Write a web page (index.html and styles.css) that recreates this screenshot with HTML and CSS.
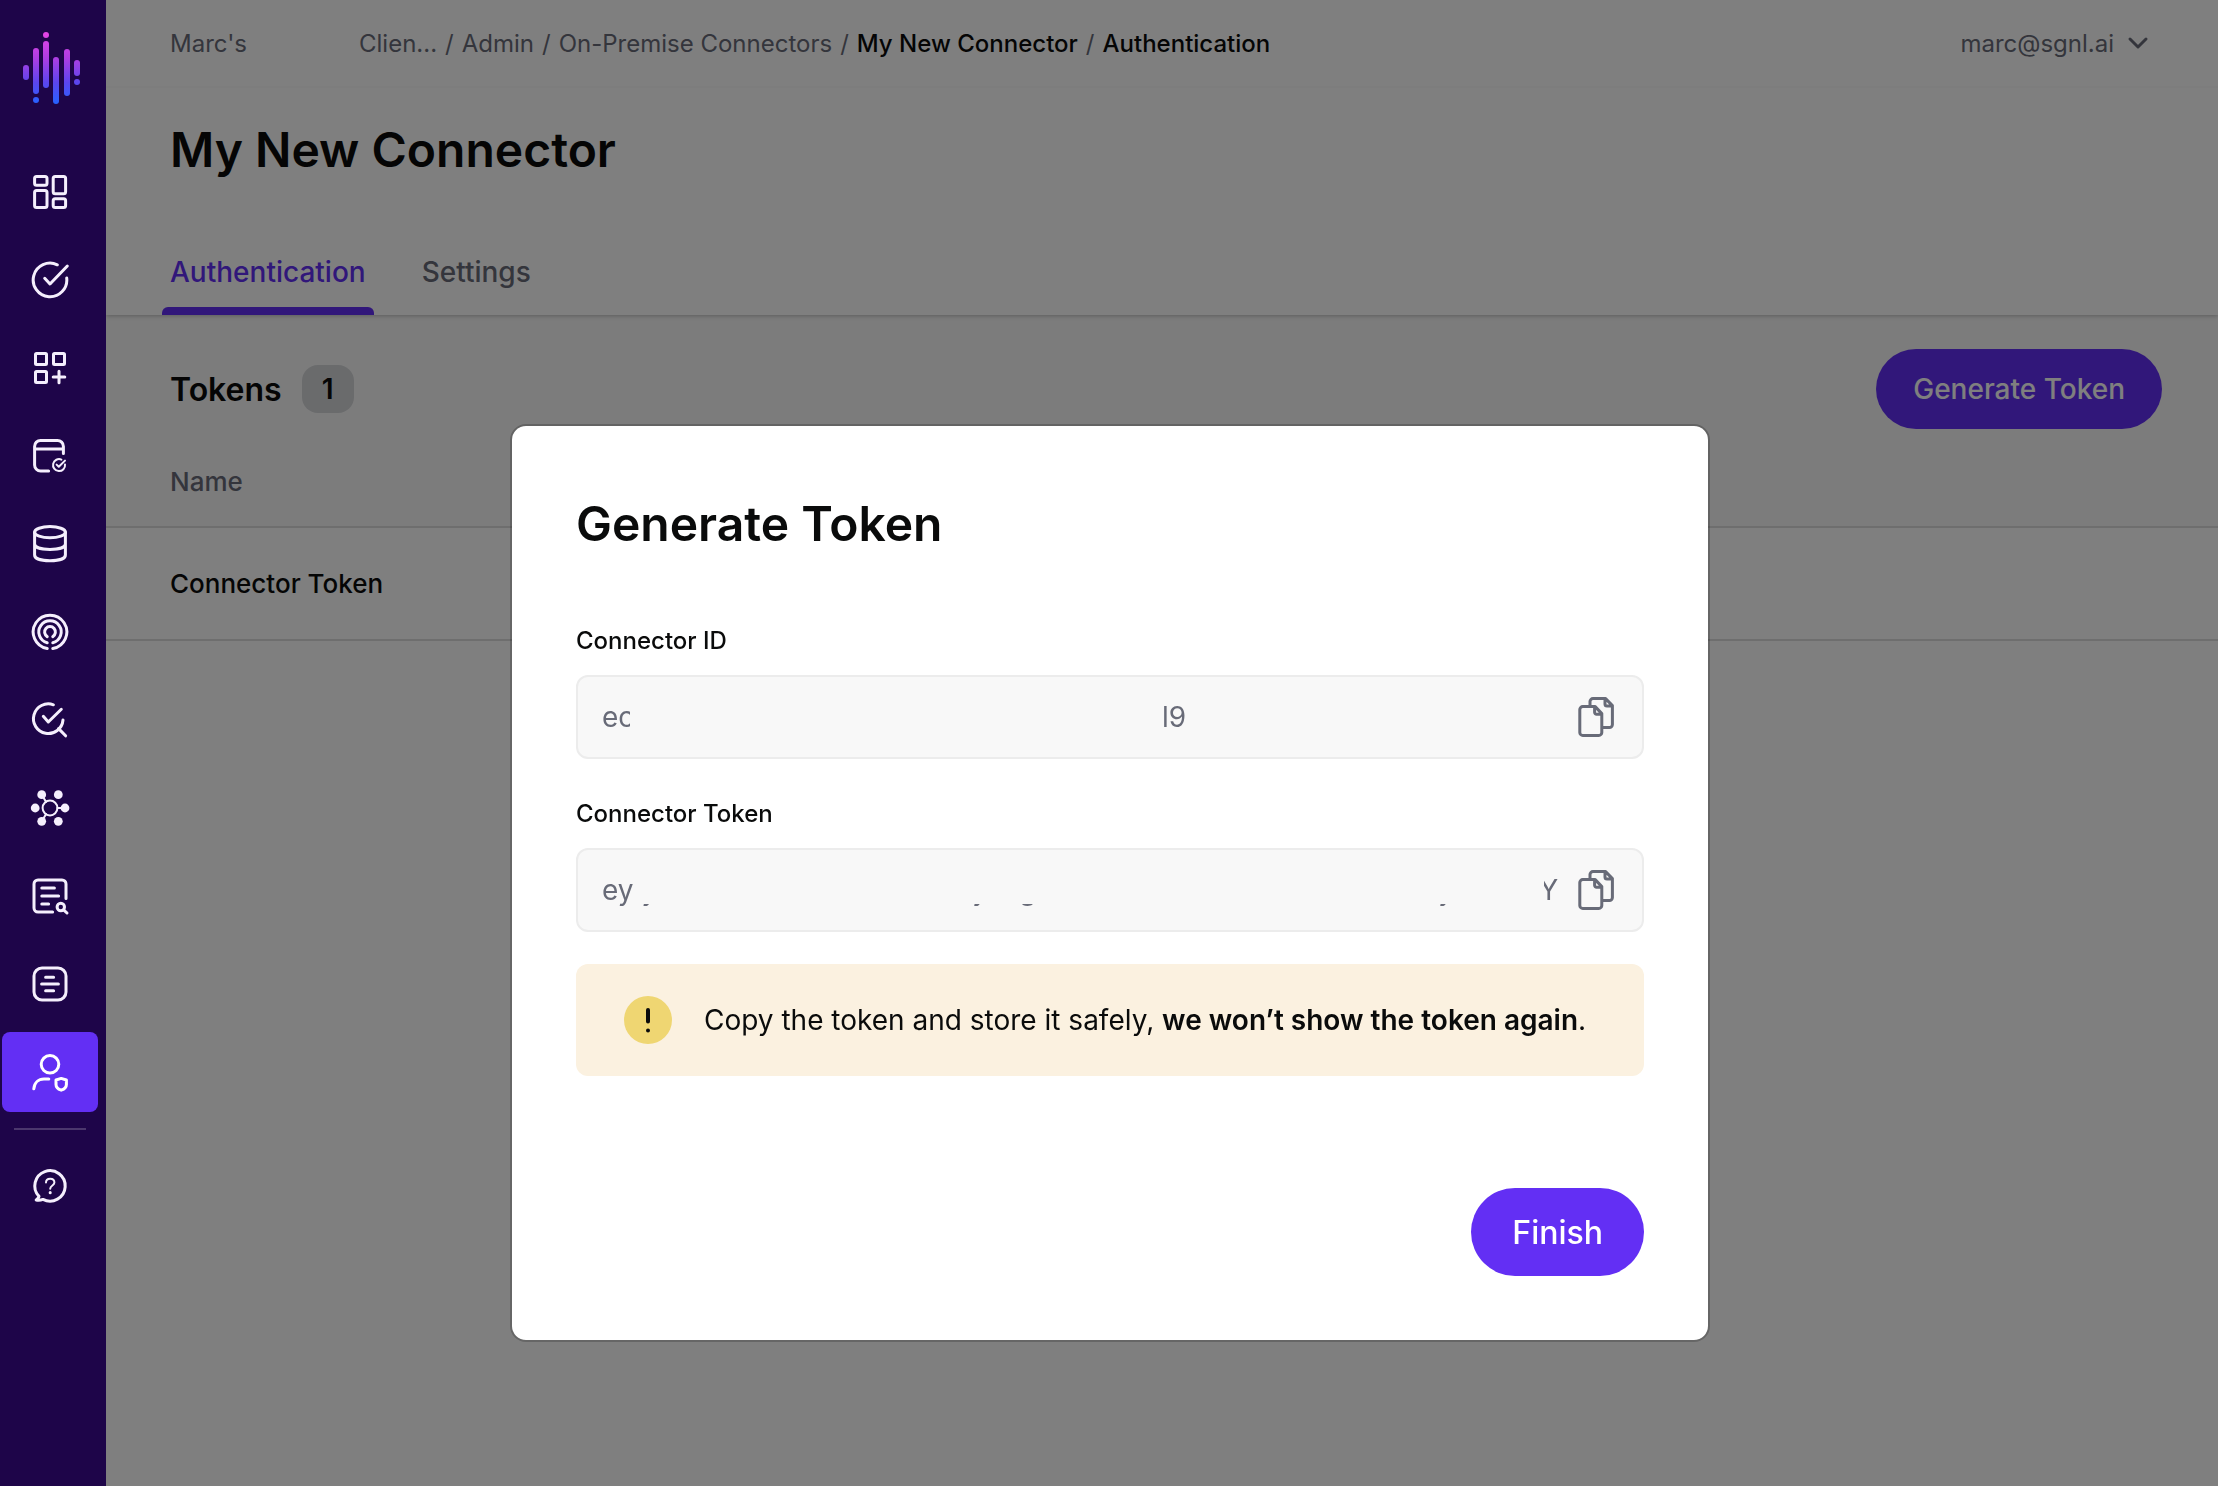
FILE: index.html
```html
<!DOCTYPE html>
<html lang="en">

<head>
    <meta charset="UTF-8">
    <title>My New Connector</title>
    <link rel="stylesheet" href="styles.css">
</head>

<body>

    <nav class="sidebar">
        <a href="#" class="logo" aria-label="Home">
            <svg viewBox="0 0 60 72">
                <defs>
                    <linearGradient id="fade" gradientUnits="userSpaceOnUse" x1="0" y1="0" x2="0" y2="72">
                        <stop offset="0" stop-color="#e645e6" />
                        <stop offset="0.35" stop-color="#b03de2" />
                        <stop offset="0.7" stop-color="#5c45ee" />
                        <stop offset="1" stop-color="#2563ff" />
                    </linearGradient>
                </defs>
                <g fill="url(#fade)">
                    <rect x="1" y="33" width="6" height="15" rx="3" />
                    <rect x="11" y="16" width="6" height="46" rx="3" />
                    <circle cx="14" cy="68" r="3" />
                    <circle cx="24" cy="3" r="3" />
                    <rect x="21" y="9" width="6" height="47" rx="3" />
                    <rect x="31" y="25" width="6" height="47" rx="3" />
                    <rect x="42" y="17" width="6" height="47" rx="3" />
                    <rect x="52" y="28" width="6" height="16" rx="3" />
                    <circle cx="55" cy="50" r="3" />
                </g>
            </svg>
        </a>
        <a href="#" aria-label="Dashboard">
            <svg viewBox="0 0 40 40">
                <rect x="4.6" y="4.6" width="12.4" height="8.6" rx="2" />
                <rect x="23.2" y="4.6" width="12.4" height="17.2" rx="2" />
                <rect x="4.6" y="18.4" width="12.4" height="17" rx="2" />
                <rect x="23.2" y="26.8" width="12.4" height="8.6" rx="2" />
            </svg>
        </a>
        <a href="#" aria-label="Policies">
            <svg viewBox="0 0 40 40">
                <path d="M27.3 4.8A16.8 16.8 0 1 0 36.7 18" />
                <path d="M14.7 18.3L20 24L37.3 6" />
            </svg>
        </a>
        <a href="#" aria-label="Integrations">
            <svg viewBox="0 0 40 40">
                <rect x="5.5" y="5.5" width="11" height="11" rx="1" />
                <rect x="23.5" y="5.5" width="11" height="11" rx="1" />
                <rect x="5.5" y="23.5" width="11" height="11" rx="1" />
                <path d="M29 23.2V34.8M23.2 29H34.8" />
            </svg>
        </a>
        <a href="#" aria-label="Protected systems">
            <svg viewBox="0 0 40 40">
                <path d="M18.6 35H10.6A6 6 0 0 1 4.6 29V10.4A6 6 0 0 1 10.6 4.4H27.4A6 6 0 0 1 33.4 10.4V17.6M4.6 13H33.4" />
                <path class="thin" d="M31.4 23.6A6 6 0 1 0 35 28.4M26.6 28.6L28.8 30.8L35 24.6" />
            </svg>
        </a>
        <a href="#" aria-label="Data">
            <svg viewBox="0 0 40 40">
                <ellipse cx="20" cy="8.2" rx="15.4" ry="5.6" />
                <path d="M4.6 8.2V31C4.6 34.6 11 36.8 20 36.8S35.4 34.6 35.4 31V8.2M4.6 20C4.6 23.4 11 25.4 20 25.4S35.4 23.4 35.4 20" />
            </svg>
        </a>
        <a href="#" aria-label="Signals">
            <svg viewBox="0 0 40 40">
                <path d="M17.2 36.5A16.8 16.8 0 1 1 22.8 36.5" />
                <path d="M17.2 30.8A11.2 11.2 0 1 1 22.8 30.8" />
                <path d="M17.2 24.6A5.4 5.4 0 1 1 22.8 24.6" />
            </svg>
        </a>
        <a href="#" aria-label="Access search">
            <svg viewBox="0 0 40 40">
                <path d="M23.4 4.8A14.8 14.8 0 1 0 33 20" />
                <path d="M13.3 16.3L18.3 22L31.3 9.3M28.6 28.6L35.6 35.8" />
            </svg>
        </a>
        <a href="#" aria-label="Graph">
            <svg viewBox="0 0 40 40">
                <circle class="thin" cx="20" cy="20" r="7.4" />
                <path class="thin" d="M11.7 6.7L16 13.8M27.4 20H35M11.7 33.3L16 26.2" />
                <g class="dots">
                    <circle cx="11.7" cy="6.7" r="4.4" />
                    <circle cx="28.3" cy="6.7" r="4.4" />
                    <circle cx="5.2" cy="20" r="4.4" />
                    <circle cx="35" cy="20" r="4.4" />
                    <circle cx="11.7" cy="33.3" r="4.4" />
                    <circle cx="28.3" cy="33.3" r="4.4" />
                </g>
            </svg>
        </a>
        <a href="#" aria-label="Reports">
            <svg viewBox="0 0 40 40">
                <path d="M22.6 36H8A4 4 0 0 1 4 32V8A4 4 0 0 1 8 4H32A4 4 0 0 1 36 8V22.4" />
                <path d="M11.8 12H24.4M11.8 20H28.6M11.8 28H18.6" />
                <circle cx="30.8" cy="31" r="3.7" />
                <path d="M33.6 33.8L37 37" />
            </svg>
        </a>
        <a href="#" aria-label="Logs">
            <svg viewBox="0 0 40 40">
                <rect x="4" y="4" width="32" height="32" rx="8" />
                <path d="M15.6 13.2H23.6M11.6 20H28.4M15.6 26.8H23.6" />
            </svg>
        </a>
        <a href="#" class="active" aria-label="Admin">
            <svg viewBox="0 0 40 40">
                <circle cx="20" cy="12.3" r="8.8" />
                <path d="M3.8 36.8C4.4 30.6 8.6 27 14 27H18.8" />
                <path d="M31.2 26.4L36.4 28V32.4C36.4 35.2 34 37.2 31.2 38.2C28.4 37.2 26 35.2 26 32.4V28Z" />
            </svg>
        </a>
        <hr>
        <a href="#" aria-label="Help">
            <svg viewBox="0 0 40 40">
                <path d="M9 30.4A15.2 15.2 0 1 1 13 33.4C11 34.2 8.4 34.6 6.2 34C8.4 32.6 8.6 31.4 9 30.4Z" />
                <path class="thin" d="M16 16.6C16 11.6 24.4 11.6 24.4 16.6C24.4 19.6 20.2 19.4 20.2 22.8" />
                <path d="M20.2 26.6V26.7" />
            </svg>
        </a>
    </nav>

    <main>
        <header>
            <div class="topbar">
                <a href="#" class="client">Marc's</a>
                <nav class="breadcrumb">
                    <a href="#">Clien...</a>
                    <span>/</span>
                    <a href="#">Admin</a>
                    <span>/</span>
                    <a href="#">On-Premise Connectors</a>
                    <span>/</span>
                    <a href="#" class="current">My New Connector</a>
                    <span>/</span>
                    <a href="#" class="current">Authentication</a>
                </nav>
                <button class="account">marc@sgnl.ai
                    <svg viewBox="0 0 24 24"><path d="M4 8L12 16L20 8" /></svg>
                </button>
            </div>
            <h1>My New Connector</h1>
            <div class="tabs">
                <a href="#" class="selected">Authentication</a>
                <a href="#">Settings</a>
            </div>
        </header>

        <section>
            <div class="section-top">
                <h2>Tokens</h2>
                <span class="count">1</span>
                <button class="generate">Generate Token</button>
            </div>
            <table>
                <thead>
                    <tr>
                        <th>Name</th>
                    </tr>
                </thead>
                <tbody>
                    <tr>
                        <td>Connector Token</td>
                    </tr>
                </tbody>
            </table>
        </section>
    </main>

    <div class="overlay">
        <div class="modal" role="dialog" aria-labelledby="modal-title">
            <h2 id="modal-title">Generate Token</h2>

            <label for="connector-id">Connector ID</label>
            <div class="field">
                <input id="connector-id" type="text" readonly value="ec                                                                   l9">
                <span class="redacted redacted-id"></span>
                <button aria-label="Copy connector ID">
                    <svg viewBox="0 0 40 40">
                        <path d="M14 9V4.6A3 3 0 0 1 17 1.6H29.6L36.4 8.6V27.6A3 3 0 0 1 33.4 30.6H26M29 2V7A2 2 0 0 0 31 9H36" />
                        <path d="M6.8 9.6H19.2L25.8 16.6V35.4A3 3 0 0 1 22.8 38.4H6.8A3 3 0 0 1 3.8 35.4V12.6A3 3 0 0 1 6.8 9.6ZM18.6 10V15.2A2 2 0 0 0 20.6 17.2H25.4" />
                    </svg>
                </button>
            </div>

            <label for="connector-token">Connector Token</label>
            <div class="field">
                <input id="connector-token" type="text" readonly value="ey y                                        y    g                                                   y         nY">
                <span class="redacted redacted-token"></span>
                <button aria-label="Copy connector token">
                    <svg viewBox="0 0 40 40">
                        <path d="M14 9V4.6A3 3 0 0 1 17 1.6H29.6L36.4 8.6V27.6A3 3 0 0 1 33.4 30.6H26M29 2V7A2 2 0 0 0 31 9H36" />
                        <path d="M6.8 9.6H19.2L25.8 16.6V35.4A3 3 0 0 1 22.8 38.4H6.8A3 3 0 0 1 3.8 35.4V12.6A3 3 0 0 1 6.8 9.6ZM18.6 10V15.2A2 2 0 0 0 20.6 17.2H25.4" />
                    </svg>
                </button>
            </div>

            <div class="warning">
                <svg viewBox="0 0 48 48">
                    <circle cx="24" cy="24" r="24" />
                    <path d="M24 14V25.4M24 34.4V34.6" />
                </svg>
                <p>Copy the token and store it safely, <strong>we won’t show the token again</strong>.</p>
            </div>

            <button class="finish">Finish</button>
        </div>
    </div>

</body></html>
```
FILE: styles.css
```css
* {
    box-sizing: border-box;
}

body {
    display: flex;
    min-height: 100vh;
    margin: 0;
    font-family: Inter, "Liberation Sans", sans-serif;
    color: #0a0b0b;
    background-color: #fff;
}

h1,
h2,
p {
    margin: 0;
}

h1,
h2 {
    font-weight: 600;
}

a {
    color: inherit;
    text-decoration: none;
}

button {
    border: none;
    padding: 0;
    font-family: inherit;
    cursor: pointer;
}

/* sidebar */

.sidebar {
    position: relative;
    z-index: 2;
    flex: none;
    display: flex;
    flex-direction: column;
    gap: 8px;
    width: 106px;
    padding: 32px 8px 0 2px;
    background-color: #1e0549;
}

.sidebar a {
    display: flex;
    justify-content: center;
    align-items: center;
    height: 80px;
    border-radius: 8px;
}

.sidebar svg {
    width: 40px;
    height: 40px;
    fill: none;
    stroke: #f5effd;
    stroke-width: 3;
    stroke-linecap: round;
    stroke-linejoin: round;
}

.sidebar .thin {
    stroke-width: 2;
}

.sidebar .dots {
    fill: #f5effd;
    stroke: none;
}

.sidebar .logo {
    height: 72px;
    margin-bottom: 40px;
    padding-left: 4px;
}

.sidebar .logo svg {
    width: 60px;
    height: 72px;
    stroke: none;
}

.sidebar .active {
    background-color: #632ff4;
}

.sidebar .active svg {
    stroke: #fff;
}

.sidebar hr {
    width: 72px;
    height: 2px;
    margin: 8px auto;
    border: none;
    background-color: #4b376d;
}

/* page */

main {
    flex: 1;
}

header {
    position: relative;
    box-shadow: 0 1px 4px #bbb;
}

.topbar {
    display: flex;
    align-items: center;
    height: 88px;
    padding: 0 68px 0 64px;
    border-bottom: 2px solid #fbfbfb;
    font-size: 24px;
    color: #686b78;
}

.client {
    width: 189px;
}

.breadcrumb {
    display: flex;
    flex: 1;
    gap: 8px;
}

.current {
    font-weight: 500;
    color: #0a0b0b;
}

.account {
    display: flex;
    align-items: center;
    gap: 12px;
    font-size: 24px;
    color: #686b78;
    background: none;
}

.account svg {
    width: 24px;
    height: 24px;
    fill: none;
    stroke: #686b78;
    stroke-width: 3;
    stroke-linecap: round;
    stroke-linejoin: round;
}

h1 {
    padding: 32px 64px 0;
    font-size: 48px;
    line-height: 60px;
}

.tabs {
    display: flex;
    gap: 40px;
    padding: 48px 56px 0;
    font-size: 28px;
    font-weight: 500;
    line-height: 88px;
    color: #686b78;
}

.tabs a {
    height: 87px;
    padding: 0 8px;
}

.tabs .selected {
    color: #632ff4;
}

.tabs .selected::after {
    content: "";
    display: block;
    height: 8px;
    margin: -9px -8px 0;
    border-radius: 6px 6px 0 0;
    background-color: #632ff4;
}

section {
    background-color: #f8f8f8;
}

.section-top {
    display: flex;
    align-items: center;
    padding: 34px 56px 0 64px;
}

.section-top h2 {
    font-size: 32px;
}

.count {
    margin-left: 20px;
    padding: 0 20px;
    border-radius: 16px;
    font-size: 28px;
    font-weight: 600;
    line-height: 48px;
    background-color: #d4d6d9;
}

.generate {
    height: 80px;
    margin-left: auto;
    padding: 0 37px;
    border-radius: 40px;
    font-size: 28px;
    font-weight: 500;
    color: #fff;
    background-color: #632ff4;
}

table {
    width: 100%;
    border-collapse: collapse;
    font-size: 26px;
    text-align: left;
}

th,
td {
    padding: 0 64px;
    border-bottom: 2px solid #dcdcdc;
    font-weight: 500;
}

th {
    height: 98px;
    padding-top: 8px;
    color: #686b78;
}

td {
    height: 113px;
    background-color: #fff;
}

/* modal */

.overlay {
    position: fixed;
    inset: 0;
    display: flex;
    justify-content: center;
    align-items: flex-start;
    padding: 424px 0 0 2px;
    background-color: rgba(0, 0, 0, 0.5);
}

.modal {
    display: flex;
    flex-direction: column;
    width: 1200px;
    padding: 64px;
    border: 2px solid rgba(0, 0, 0, 0.2);
    border-radius: 16px;
    background-color: #fff;
    background-clip: padding-box;
}

.modal h2 {
    margin-bottom: 60px;
    font-size: 48px;
    line-height: 68px;
}

.modal label {
    margin: 4px 0 16px;
    font-size: 24px;
    font-weight: 500;
    line-height: 37px;
}

.field {
    position: relative;
    display: flex;
    align-items: center;
    height: 84px;
    margin-bottom: 32px;
    padding: 0 26px 0 24px;
    border: 2px solid #ececec;
    border-radius: 12px;
    background-color: #f8f8f8;
}

.field input {
    flex: 1;
    min-width: 0;
    height: 80px;
    padding: 0;
    border: none;
    outline: none;
    font-family: inherit;
    font-size: 28px;
    color: #686b78;
    background: none;
}

.field button {
    margin-left: 14px;
    background: none;
}

.field svg {
    display: block;
    width: 40px;
    height: 40px;
    fill: none;
    stroke: #686b78;
    stroke-width: 3;
    stroke-linejoin: round;
}

/* blanks out the middle of the secret values */
.redacted {
    position: absolute;
    background-color: #f8f8f8;
}

.redacted-id {
    top: 16px;
    left: 52px;
    width: 532px;
    height: 48px;
}

.redacted-token {
    top: 16px;
    left: 56px;
    width: 910px;
    height: 38px;
}

.warning {
    display: flex;
    align-items: center;
    gap: 32px;
    height: 112px;
    padding: 0 48px;
    border-radius: 12px;
    font-size: 28px;
    background-color: #fbf1e0;
}

.warning svg {
    width: 48px;
    height: 48px;
    fill: #efd672;
}

.warning path {
    stroke: #0a0b0b;
    stroke-width: 4;
    stroke-linecap: round;
}

.warning strong {
    font-weight: 600;
}

.finish {
    align-self: flex-end;
    height: 88px;
    margin-top: 112px;
    padding: 0 41px;
    border-radius: 44px;
    font-size: 32px;
    font-weight: 500;
    color: #fff;
    background-color: #632ff4;
}
```
